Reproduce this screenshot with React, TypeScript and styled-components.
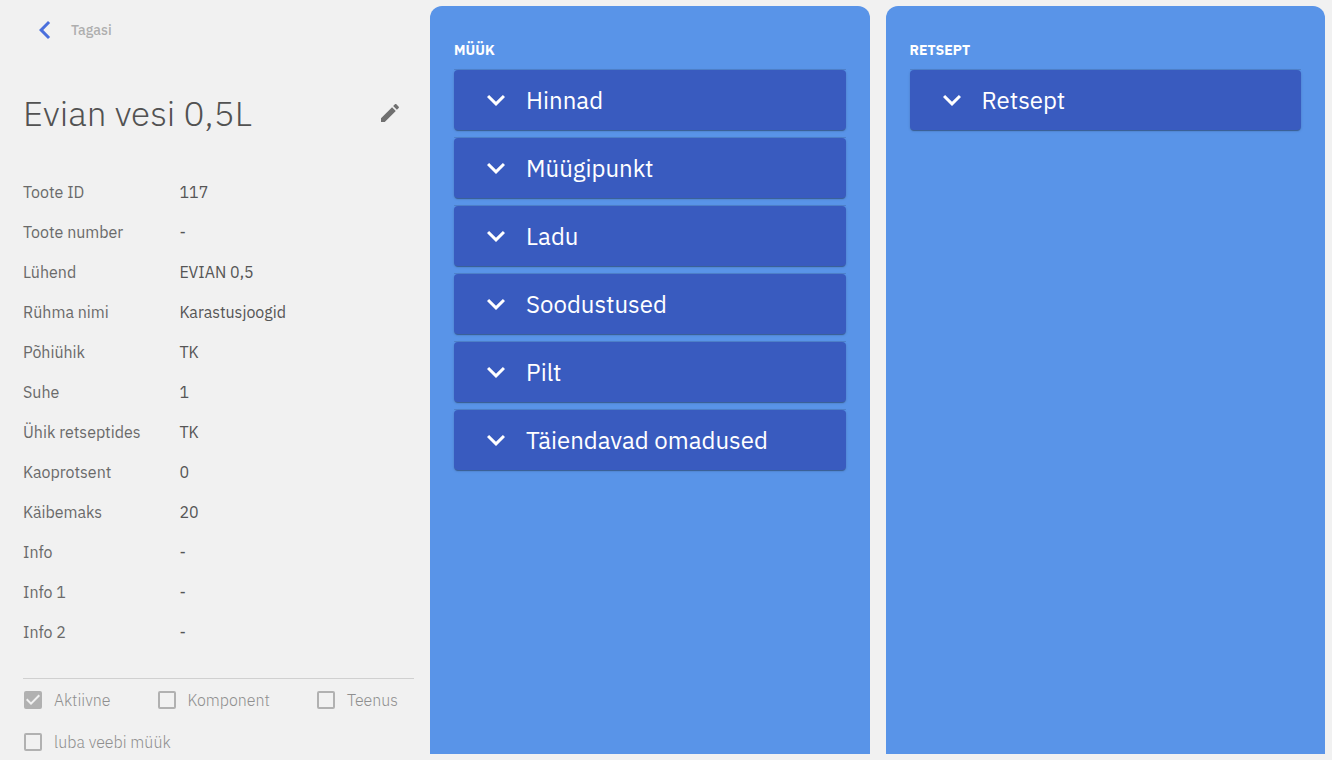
import React, { useState } from "react";
import styled, { createGlobalStyle } from "styled-components";

const GlobalStyle = createGlobalStyle`
  *, *::before, *::after { box-sizing: border-box; }
  body {
    margin: 0;
    background: #f1f1f1;
    color: #525252;
    font-family: "IBM Plex Sans", "Noto Sans", sans-serif;
    font-size: 16px;
    line-height: 24px;
  }
`;

const Page = styled.main`
  display: grid;
  grid-template-columns: 0.89fr 1fr 1fr;
  gap: 16px;
  min-height: 100vh;
  padding: 6px 7px 6px 23px;
`;

const Sidebar = styled.aside`
  display: flex;
  flex-direction: column;
  min-width: 0;
`;

const BackButton = styled.button`
  display: flex;
  align-items: center;
  align-self: flex-start;
  gap: 8px;
  height: 48px;
  padding: 0 4px;
  border: 0;
  background: none;
  color: #aeaeae;
  font: inherit;
  font-size: 14px;
  font-weight: 500;
  cursor: pointer;

  svg { color: #4a6fdc; }
`;

const TitleRow = styled.header`
  display: flex;
  align-items: center;
  justify-content: space-between;
  height: 48px;
  margin-top: 35px;
`;

const Title = styled.h1`
  margin: 0;
  font-size: 35px;
  font-weight: 300;
  line-height: 48px;
`;

const IconButton = styled.button`
  display: flex;
  padding: 12px;
  border: 0;
  background: none;
  color: #707070;
  cursor: pointer;
`;

const Details = styled.dl`
  margin: 35px 0 0;
`;

const DetailRow = styled.div`
  display: grid;
  grid-template-columns: 2fr 3fr;
  align-items: center;
  height: 40px;
`;

const Term = styled.dt`
  color: #6a6a6a;
`;

const Value = styled.dd`
  margin: 0;
  color: #565656;
`;

const Flags = styled.div`
  display: flex;
  flex-wrap: wrap;
  gap: 18px 46px;
  margin-top: 26px;
  padding-top: 9px;
  border-top: 1px solid #d0d0d0;
`;

const FlagLabel = styled.label`
  display: flex;
  align-items: center;
  gap: 12px;
  height: 24px;
  padding-left: 1px;
  color: #8f8f8f;
  font-weight: 300;
`;

const CheckBox = styled.span`
  display: grid;

  > * { grid-area: 1 / 1; }
`;

const CheckInput = styled.input`
  appearance: none;
  width: 18px;
  height: 18px;
  margin: 0;
  border: 2px solid #b1b1b1;
  border-radius: 2px;

  &:checked { background: #b1b1b1; }
  &:not(:checked) + svg { display: none; }
`;

const Panel = styled.section`
  min-width: 0;
  padding: 32px 24px 24px;
  border-radius: 12px 12px 0 0;
  background: #5994e8;
  color: #ffffff;
`;

const PanelHeading = styled.h2`
  margin: 0 0 7px;
  font-size: 14px;
  font-weight: 700;
  line-height: 24px;
  text-transform: uppercase;
`;

const CardList = styled.div`
  display: flex;
  flex-direction: column;
  gap: 7px;
`;

const Card = styled.div`
  border-top: 1px solid #4f82cc;
`;

const CardButton = styled.button`
  display: flex;
  align-items: center;
  gap: 12px;
  width: 100%;
  height: 60px;
  padding: 0 24px;
  border: 0;
  border-radius: 4px;
  background: #395bbf;
  box-shadow: 0 2px 1px -1px rgba(0, 0, 0, 0.2), 0 1px 1px rgba(0, 0, 0, 0.14),
    0 1px 3px rgba(0, 0, 0, 0.12);
  color: #ffffff;
  font: inherit;
  font-size: 24px;
  text-align: left;
  cursor: pointer;
`;

const Icon = ({ path, size }: { path: string; size: number }) => (
  <svg width={size} height={size} viewBox="0 0 24 24" fill="currentColor" aria-hidden="true">
    <path d={path} />
  </svg>
);

const CHEVRON_LEFT = "M15.41 7.41L14 6l-6 6 6 6 1.41-1.41L10.83 12z";
const CHEVRON_DOWN = "M16.59 8.59L12 13.17 7.41 8.59 6 10l6 6 6-6z";
const PENCIL =
  "M3 17.25V21h3.75L17.81 9.94l-3.75-3.75L3 17.25zM20.71 7.04c.39-.39.39-1.02 0-1.41l-2.34-2.34c-.39-.39-1.02-.39-1.41 0l-1.83 1.83 3.75 3.75 1.83-1.83z";

const details: [string, string][] = [
  ["Toote ID", "117"],
  ["Toote number", "-"],
  ["Lühend", "EVIAN 0,5"],
  ["Rühma nimi", "Karastusjoogid"],
  ["Põhiühik", "TK"],
  ["Suhe", "1"],
  ["Ühik retseptides", "TK"],
  ["Kaoprotsent", "0"],
  ["Käibemaks", "20"],
  ["Info", "-"],
  ["Info 1", "-"],
  ["Info 2", "-"],
];

const flags = [
  { id: "active", label: "Aktiivne", checked: true },
  { id: "component", label: "Komponent", checked: false },
  { id: "service", label: "Teenus", checked: false },
  { id: "web-sale", label: "luba veebi müük", checked: false },
];

const panels = [
  {
    title: "Müük",
    items: ["Hinnad", "Müügipunkt", "Ladu", "Soodustused", "Pilt", "Täiendavad omadused"],
  },
  { title: "Retsept", items: ["Retsept"] },
];

function AccordionCard({ label }: { label: string }) {
  const [open, setOpen] = useState(false);
  return (
    <Card>
      <CardButton type="button" aria-expanded={open} onClick={() => setOpen(!open)}>
        <Icon path={CHEVRON_DOWN} size={36} />
        {label}
      </CardButton>
    </Card>
  );
}

export default function App() {
  return (
    <>
      <GlobalStyle />
      <Page>
        <Sidebar>
          <BackButton type="button">
            <Icon path={CHEVRON_LEFT} size={36} />
            Tagasi
          </BackButton>
          <TitleRow>
            <Title>Evian vesi 0,5L</Title>
            <IconButton type="button" aria-label="Muuda">
              <Icon path={PENCIL} size={24} />
            </IconButton>
          </TitleRow>
          <Details>
            {details.map(([term, value]) => (
              <DetailRow key={term}>
                <Term>{term}</Term>
                <Value>{value}</Value>
              </DetailRow>
            ))}
          </Details>
          <Flags>
            {flags.map(({ id, label, checked }) => (
              <FlagLabel key={id} htmlFor={id}>
                <CheckBox>
                  <CheckInput id={id} type="checkbox" defaultChecked={checked} disabled />
                  <svg width="18" height="18" viewBox="3 3 18 18" fill="#f1f1f1" aria-hidden="true">
                    <path d="M10 17l-5-5 1.41-1.41L10 14.17l7.59-7.59L19 8l-9 9z" />
                  </svg>
                </CheckBox>
                {label}
              </FlagLabel>
            ))}
          </Flags>
        </Sidebar>
        {panels.map(({ title, items }) => (
          <Panel key={title}>
            <PanelHeading>{title}</PanelHeading>
            <CardList>
              {items.map((item) => (
                <AccordionCard key={item} label={item} />
              ))}
            </CardList>
          </Panel>
        ))}
      </Page>
    </>
  );
}
